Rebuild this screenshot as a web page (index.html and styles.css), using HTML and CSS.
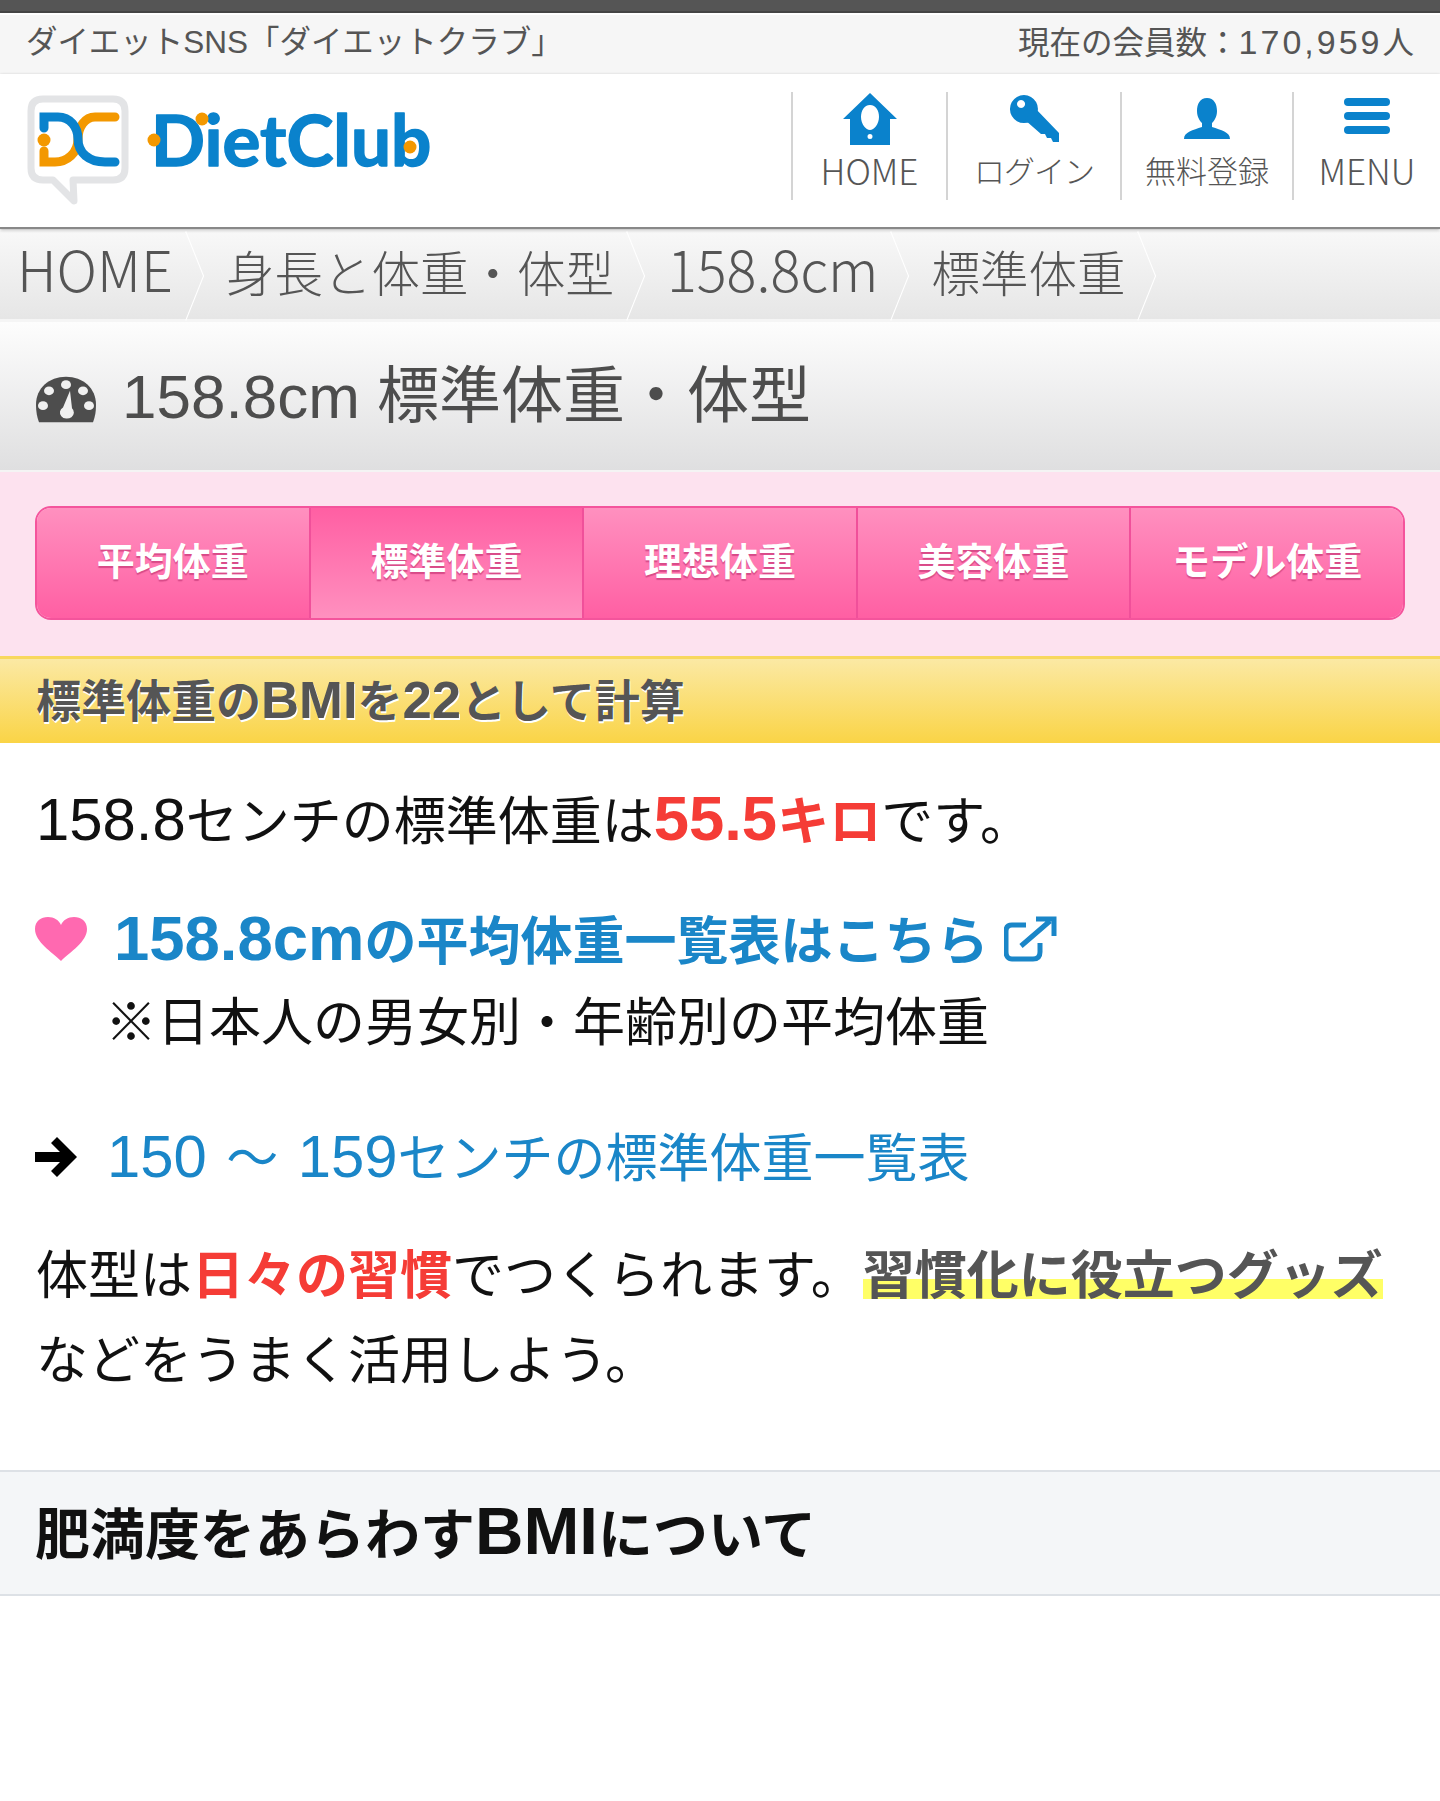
FILE: index.html
```html
<!DOCTYPE html>
<html lang="ja">
<head>
    <meta charset="UTF-8">
    <meta name="viewport" content="width=device-width, initial-scale=1.0">
    <title>158.8cm 標準体重・体型</title>
    <link rel="stylesheet" href="styles.css">
</head>
<body>

<div class="top-strip"></div>
<div class="notice">
    <span class="notice-left">ダイエットSNS「ダイエットクラブ」</span>
    <span class="notice-right">現在の会員数&#xFF1A;<span class="count">170,959</span>人</span>
</div>

<header class="header">
    <a class="logo" href="#">
        <svg width="440" height="120" viewBox="0 0 440 120">
            <path class="bubble" d="M16 4H86Q98 4 98 16V73Q98 85 86 85H46L47 106L26 85H16Q4 85 4 73V16Q4 4 16 4Z"/>
            <path class="mark-orange" d="M88 22H68C58 22 51 32 51 44C51 58 40 67 28 67H17V56"/>
            <path class="mark-blue" d="M17 33V22H31C43 22 51 32 51 44C51 58 62 67 78 67H88"/>
            <circle class="dot" cx="17" cy="45" r="6.500"/>
            <text class="wordmark" x="124" y="71">DietClub</text>
            <circle class="dot" cx="127" cy="45" r="6.500"/>
            <circle class="dot" cx="175" cy="24" r="6.500"/>
            <circle class="dot" cx="383" cy="52" r="6.500"/>
        </svg>
    </a>
    <nav class="nav">
        <a class="nav-item nav-home" href="#">
            <svg width="56" height="54" viewBox="0 0 56 54">
                <path class="nav-icon" fill-rule="evenodd" d="M28 1L55 27H48V53H8V27H1ZM28 13C22 13 19 19 19 25C19 32 24 38 28 38C32 38 37 32 37 25C37 19 34 13 28 13ZM28 42A2.500 2.500 0 1 0 28 47A2.500 2.500 0 1 0 28 42Z"/>
            </svg>
            <span class="lat">HOME</span>
        </a>
        <a class="nav-item nav-login" href="#">
            <svg width="56" height="54" viewBox="0 0 56 54">
                <path class="nav-icon" fill-rule="evenodd" d="M18 3A14 14 0 1 1 17.900 3ZM15 8A4 4 0 1 0 15.100 8Z"/>
                <path class="nav-icon" d="M28 15L53 41V50H47L45 46H41L39 42H35L19 28Z"/>
            </svg>
            <span class="kana">ログイン</span>
        </a>
        <a class="nav-item nav-signup" href="#">
            <svg width="56" height="54" viewBox="0 0 56 54">
                <path class="nav-icon" d="M28 6C35 6 38 12 38 19C38 25 35 29 33 31V35C42 38 51 40 51 47H5C5 40 14 38 23 35V31C21 29 18 25 18 19C18 12 21 6 28 6Z"/>
            </svg>
            <span>無料登録</span>
        </a>
        <a class="nav-item nav-menu" href="#">
            <svg width="56" height="54" viewBox="0 0 56 54">
                <rect class="nav-icon" x="5" y="6" width="46" height="8" rx="4"/>
                <rect class="nav-icon" x="5" y="20" width="46" height="8" rx="4"/>
                <rect class="nav-icon" x="5" y="34" width="46" height="8" rx="4"/>
            </svg>
            <span class="lat">MENU</span>
        </a>
    </nav>
</header>

<ol class="crumbs">
    <li><span class="lat">HOME</span></li>
    <li>身長と体重・体型</li>
    <li><span class="lat">158.8cm</span></li>
    <li>標準体重</li>
</ol>

<h1 class="page-title">
    <svg width="64" height="49" viewBox="0 0 64 56" preserveAspectRatio="none">
        <path class="gauge" d="M32 2C15 2 2 15 2 34C2 42 3 48 5 54H59C61 48 62 42 62 34C62 15 49 2 32 2Z"/>
        <circle class="gauge-hole" cx="32" cy="11" r="5"/>
        <circle class="gauge-hole" cx="15" cy="18" r="5"/>
        <circle class="gauge-hole" cx="49" cy="18" r="5"/>
        <circle class="gauge-hole" cx="9" cy="35" r="5"/>
        <circle class="gauge-hole" cx="55" cy="35" r="5"/>
        <path class="gauge-hole" d="M36 18L38 38A7 7 0 1 1 29 37Z"/>
    </svg>
    <span class="title-text">158.8cm 標準体重・体型</span>
</h1>

<div class="tab-wrap">
    <ul class="tabs">
        <li>平均体重</li>
        <li class="active">標準体重</li>
        <li>理想体重</li>
        <li>美容体重</li>
        <li>モデル体重</li>
    </ul>
</div>

<h2 class="yellow-head">標準体重の<span class="lat">BMI</span>を<span class="lat">22</span>として計算</h2>

<main class="content">
    <p class="result"><span class="lat">158.8</span>センチの標準体重は<strong class="red"><span class="lat">55.5</span>キロ</strong>です。</p>

    <div class="link-row feature">
        <svg width="54" height="46" viewBox="0 0 54 46">
            <path class="heart" d="M27 45C18 36 1 26 1 13C1 5 7 1 14 1C20 1 25 4 27 9C29 4 34 1 40 1C47 1 53 5 53 13C53 26 36 36 27 45Z"/>
        </svg>
        <a href="#"><span class="lat">158.8cm</span>の平均体重一覧表はこちら</a>
        <svg class="ext" width="54" height="46" viewBox="0 0 54 46">
            <path class="ext-line" d="M36 27V36C36 40 34 43 29 43H8C4 43 2 40 2 36V15C2 11 4 9 8 9H22"/>
            <path class="ext-line" d="M17 30L46 5M32 3H50V20"/>
        </svg>
    </div>
    <p class="note">※日本人の男女別・年齢別の平均体重</p>

    <div class="link-row plain">
        <svg width="44" height="44" viewBox="0 0 44 44">
            <path d="M23 2L43 22L23 42L17 36L26 27H1V17H26L17 8Z"/>
        </svg>
        <a href="#"><span class="lat">150</span> 〜 <span class="lat">159</span>センチの標準体重一覧表</a>
    </div>

    <p class="habit">体型は<strong class="red">日々の習慣</strong>でつくられます。<strong class="marker">習慣化に役立つグッズ</strong>などをうまく活用しよう。</p>
</main>

<h2 class="section-head">肥満度をあらわす<span class="lat">BMI</span>について</h2>

</body>
</html>
```

FILE: styles.css
```css
body {
    margin: 0;
    background-color: white;
    color: #111;
    font-family: "Liberation Sans", "Noto Sans CJK JP", sans-serif;
}
a {
    color: inherit;
    text-decoration: none;
}
h1, h2, p, ul, ol {
    margin: 0;
    padding: 0;
}
li {
    list-style: none;
}

/* latin runs are set larger than the japanese around them */
.lat {
    font-size: 1.15em;
    line-height: 0;
}

/* top */
.top-strip {
    height: 11px;
    background-color: #555;
    border-bottom: 2px solid #444;
    margin-bottom: 2px;
}
.notice {
    display: flex;
    justify-content: space-between;
    align-items: center;
    box-sizing: border-box;
    height: 59px;
    padding: 0 26px 5px;
    background-color: #f6f6f6;
    color: #555;
    font-size: 31.500px;
    line-height: 40px;
}
.count {
    font-size: 34px;
    letter-spacing: 3px;
}

/* header */
.header {
    display: flex;
    justify-content: space-between;
    height: 153px;
    background-color: white;
    border-bottom: 2px solid #888;
    box-shadow: 0 1px 3px rgba(0, 0, 0, 0.3);
    position: relative;
}
.logo {
    padding: 21px 0 0 27px;
}
.bubble {
    fill: white;
    stroke: #e3e4e6;
    stroke-width: 7;
    stroke-linejoin: round;
}
.mark-blue, .mark-orange {
    fill: none;
    stroke-width: 9;
    stroke-linecap: round;
}
.mark-blue {
    stroke: #0a82cc;
}
.mark-orange {
    stroke: #f39800;
}
.dot {
    fill: #f39800;
}
.wordmark {
    fill: #0a82cc;
    stroke: #0a82cc;
    stroke-width: 1.500;
    stroke-linejoin: round;
    font-family: Lato, sans-serif;
    font-size: 71px;
    font-weight: 700;
}
.nav {
    display: flex;
    padding-top: 18px;
}
.nav-item {
    display: flex;
    flex-direction: column;
    align-items: center;
    height: 108px;
    border-left: 2px solid #d4d4d4;
    color: #555;
    font-size: 31px;
    font-weight: 300;
    font-family: "Noto Sans CJK JP", sans-serif;
    line-height: 42px;
}
.nav-item svg {
    display: block;
    margin-bottom: 3px;
}
.nav-item .lat {
    font-size: 35px;
    line-height: 42px;
}
.nav-item .kana {
    letter-spacing: -1px;
}
.nav-icon {
    fill: #0a82cc;
}
.nav-home {
    width: 153px;
}
.nav-login {
    width: 172px;
}
.nav-signup {
    width: 170px;
}
.nav-menu {
    width: 146px;
}

/* breadcrumb */
.crumbs {
    display: flex;
    align-items: center;
    box-sizing: border-box;
    height: 91px;
    margin-top: 2px;
    padding: 0 0 9px 17px;
    background: linear-gradient(#f8f8f8, #e6e6e6);
    border-bottom: 3px solid #f5f5f5;
    color: #555;
    font-size: 48.500px;
    font-weight: 300;
    font-family: "Noto Sans CJK JP", sans-serif;
}
.crumbs li {
    position: relative;
    margin-right: 53px;
    line-height: 70px;
}
.crumbs li::after {
    content: "";
    position: absolute;
    top: 50%;
    right: -45px;
    width: 62px;
    height: 62px;
    margin-top: -27px;
    border-top: 2px solid #fff;
    border-right: 2px solid #fff;
    transform: scaleX(0.4) rotate(45deg);
}

/* title */
.page-title {
    display: flex;
    align-items: center;
    gap: 24px;
    height: 148px;
    padding-left: 34px;
    background: linear-gradient(#fdfdfd, #dfdfe0);
    border-bottom: 2px solid #f4f4f4;
    color: #4d4d4d;
    font-size: 62px;
    font-weight: 400;
}
.page-title svg {
    margin-top: 6px;
}
.title-text {
    margin-bottom: 10px;
}
.gauge {
    fill: #4d4d4d;
}
.gauge-hole {
    fill: #f0f0f0;
}

/* tabs */
.tab-wrap {
    padding: 34px 35px 36px;
    background-color: #fde2ef;
}
.tabs {
    display: flex;
    height: 110px;
    border: 2px solid #f4549c;
    border-radius: 16px;
    overflow: hidden;
}
.tabs li {
    flex: 1;
    display: flex;
    align-items: center;
    justify-content: center;
    padding-bottom: 9px;
    border-left: 2px solid #f0509a;
    background: linear-gradient(#ff90bf, #ff5fa3);
    color: white;
    font-size: 38px;
    font-weight: bold;
    text-shadow: 0 2px 1px #d84a88;
}
.tabs li:first-child {
    border-left: none;
}
.tabs .active {
    background: linear-gradient(#ff5fa3, #ff90bf);
}

/* yellow heading */
.yellow-head {
    height: 84px;
    padding-left: 36px;
    background: linear-gradient(#fbe9a4, #fad446);
    border-top: 3px solid #f8d85e;
    color: #555;
    font-size: 45px;
    font-weight: bold;
    line-height: 88px;
    text-shadow: 1px 2px 0 #fff;
}
.yellow-head .lat {
    font-size: 1.170em;
}

/* body text */
.content {
    padding: 37px 36px 0;
    font-size: 52px;
    line-height: 85px;
}
.red {
    color: #f53c36;
}
.red .lat, .feature .lat {
    font-size: 1.220em;
}
.result {
    margin-bottom: 31px;
}
.link-row {
    display: flex;
    align-items: center;
}
.link-row svg:first-child {
    margin-left: -2px;
}
.feature {
    gap: 26px;
    color: #1a86c8;
    font-weight: bold;
}
.feature a {
    padding-top: 4px;
    margin-bottom: -4px;
}
.heart {
    fill: #ff69b0;
}
.ext {
    margin-left: -10px;
}
.ext-line {
    fill: none;
    stroke: #1a86c8;
    stroke-width: 5;
}
.note {
    padding-left: 69px;
}
.plain {
    gap: 29px;
    margin-top: 48px;
    margin-bottom: 35px;
    color: #1a86c8;
    word-spacing: 5px;
}
.plain a {
    padding-top: 3px;
    margin-bottom: -3px;
}
.habit {
    line-height: 85px;
}
.marker {
    color: #555;
    background: linear-gradient(transparent 55%, #ffff66 55%, #ffff66 90%, transparent 90%);
}

/* section heading */
.section-head {
    margin-top: 66px;
    height: 122px;
    padding-left: 35px;
    background-color: #f4f6f8;
    border-top: 2px solid #dde1e6;
    border-bottom: 2px solid #dde1e6;
    color: #111;
    font-size: 55px;
    font-weight: bold;
    line-height: 126px;
}
.section-head .lat {
    font-size: 1.220em;
}
```
